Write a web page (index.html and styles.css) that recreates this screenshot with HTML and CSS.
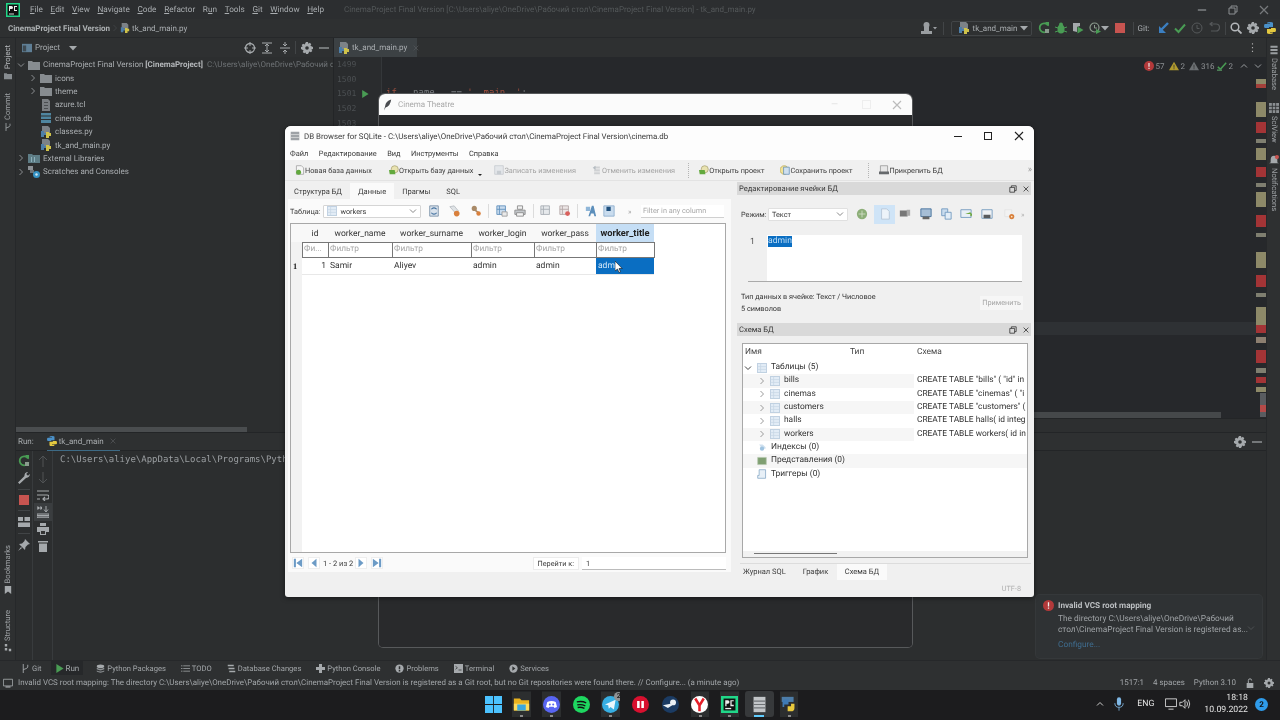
FILE: index.html
```html
<!DOCTYPE html>
<html lang="ru">
<head>
<meta charset="utf-8">
<title>PyCharm and DB Browser for SQLite</title>
<link rel="stylesheet" href="styles.css">
</head>
<body>
<svg class="sprite" xmlns="http://www.w3.org/2000/svg">
  <symbol id="folder" viewBox="0 0 12 10"><path d="M0 1h4l1 1h7v8H0z" fill="#878c90"/></symbol>
  <symbol id="py" viewBox="0 0 12 12"><path d="M2 0h6l2 2v5H2z" fill="#7c8287"/><path d="M1 5h3v2h2v2H4v2H1z" fill="#4d7ea8"/><path d="M6 6h3v1h2v3H9v2H6V9h0z" fill="#cfc24a"/></symbol>
  <symbol id="pylogo" viewBox="0 0 12 12"><path d="M3 1q0-1 3-1t3 1v4H5v1H1Q0 6 0 4t1-2h5V1.500H3z" fill="#4a90c8"/><path d="M9 11q0 1-3 1t-3-1V7h4V6h4q1 0 1 2t-1 2H6v.5h3z" fill="#e3c83f"/></symbol>
  <symbol id="dbfile" viewBox="0 0 12 12"><path d="M1 1h10v2.500H1zM1 4.500h10V7H1zM1 8h10v3H1z" fill="#4f86a0"/></symbol>
  <symbol id="tcl" viewBox="0 0 12 12"><path d="M2 0h6l2 2v10H2z" fill="#7a7e82"/><path d="M4 3h4v1H4zM4 6h4v1H4zM4 9h4v1H4z" fill="#4a4d50"/></symbol>
  <symbol id="libs" viewBox="0 0 12 10"><path d="M0 1h4l1 1h7v8H0z" fill="#5e7d86"/><path d="M3 4h1v5H3zM6 4h1v5H6z" fill="#8bb0bb"/></symbol>
  <symbol id="scratch" viewBox="0 0 12 12"><path d="M0 0h5v4H0z" fill="#8b9095"/><path d="M2 4h4v3H2z" fill="#6e7377"/><circle cx="8.500" cy="8.500" r="3.500" fill="#3592c4"/><circle cx="8.500" cy="8.500" r="1.200" fill="#cfe6f2"/></symbol>
  <symbol id="chevr" viewBox="0 0 8 8"><path d="M2.500 1l3 3-3 3" fill="none" stroke="currentColor"/></symbol>
  <symbol id="chevd" viewBox="0 0 8 8"><path d="M1 2.500l3 3 3-3" fill="none" stroke="currentColor"/></symbol>
  <symbol id="chevup" viewBox="0 0 8 8"><path d="M1 5.500l3-3 3 3" fill="none" stroke="currentColor"/></symbol>
  <symbol id="restore-d" viewBox="0 0 10 10"><path d="M1 3h6v6H1zM3 3V1h6v6H7" fill="none" stroke="#8b8e91"/></symbol>
  <symbol id="target" viewBox="0 0 12 12"><circle cx="6" cy="6" r="4.500" fill="none" stroke="#a5a9ac" stroke-width="1.300"/><path d="M6 0v4M6 8v4M0 6h4M8 6h4" stroke="#a5a9ac"/></symbol>
  <symbol id="expand" viewBox="0 0 12 12"><path d="M1 1h10M1 11h10M6 2.500v7M4 4l2-2 2 2M4 8l2 2 2-2" fill="none" stroke="#a5a9ac"/></symbol>
  <symbol id="collapse" viewBox="0 0 12 12"><path d="M1 6h10M6 0v3.500M6 8.500V12M4 2l2 2 2-2M4 10l2-2 2 2" fill="none" stroke="#a5a9ac"/></symbol>
  <symbol id="gear" viewBox="0 0 12 12"><path d="M5 0h2l.4 1.700 1.500-.9 1.400 1.400-.9 1.500L12 5v2l-1.600.4.900 1.500-1.400 1.400-1.500-.9L7 12H5l-.4-1.600-1.500.9-1.400-1.400.9-1.500L0 7V5l1.600-.4-.9-1.500 1.400-1.400 1.500.9z" fill="#a5a9ac"/><circle cx="6" cy="6" r="1.800" fill="#2e3031"/></symbol>
  <symbol id="minus" viewBox="0 0 12 12"><path d="M1 6h10" stroke="#a5a9ac" stroke-width="1.200"/></symbol>
  <symbol id="panel" viewBox="0 0 12 12"><path d="M0 1h12v10H0z" fill="#5f7f96"/><path d="M1 3h4v7H1z" fill="#3e4a52"/></symbol>
  <symbol id="play" viewBox="0 0 10 10"><path d="M1.500 0l8 5-8 5z" fill="#499c54"/></symbol>
  <symbol id="rerun" viewBox="0 0 12 12"><path d="M10 3.500A4.500 4.500 0 1 0 10.500 7" fill="none" stroke="#499c54" stroke-width="1.800"/><path d="M7 0h4v4.500z" fill="#499c54"/><path d="M7 7h4v4H7z" fill="#8a9a8e"/></symbol>
  <symbol id="bug" viewBox="0 0 12 12"><ellipse cx="6" cy="7" rx="3.500" ry="4.500" fill="#499c54"/><circle cx="6" cy="2.500" r="2" fill="#499c54"/><path d="M0 5l3 1M12 5L9 6M0 10l3-1M12 10L9 9" stroke="#499c54"/></symbol>
  <symbol id="cover" viewBox="0 0 12 12"><path d="M1 1h7v3L5 5v5l-4-1z" fill="#a5a9ac"/><path d="M5.500 4.500l6 3.500-6 3.500z" fill="#499c54"/></symbol>
  <symbol id="profile" viewBox="0 0 12 12"><circle cx="5.500" cy="5.500" r="4.500" fill="none" stroke="#8b9a8d" stroke-width="1.200"/><path d="M5.500 3v3h2.500" fill="none" stroke="#8b9a8d"/><path d="M7 7l5 2.500L7 12z" fill="#499c54"/></symbol>
  <symbol id="stop" viewBox="0 0 10 10"><path d="M0 0h10v10H0z" fill="#c75450"/></symbol>
  <symbol id="arrowd" viewBox="0 0 8 8"><path d="M0 2h8L4 6.500z" fill="#a5a9ac"/></symbol>
  <symbol id="person" viewBox="0 0 16 12"><circle cx="5.500" cy="3" r="3" fill="#9a9ea1"/><path d="M0 9h11v3H0zM3 5h5v4H3z" fill="#9a9ea1"/><path d="M12 5h4l-2 2.500z" fill="#9a9ea1"/></symbol>
  <symbol id="updatevcs" viewBox="0 0 12 12"><path d="M11 1L4 8" stroke="#3b7fc1" stroke-width="2.400"/><path d="M2 4v7h7z" fill="#3b7fc1"/></symbol>
  <symbol id="check" viewBox="0 0 12 12"><path d="M1 6.500l3.500 3.500L11 2.500" fill="none" stroke="#499c54" stroke-width="2"/></symbol>
  <symbol id="hist" viewBox="0 0 12 12"><circle cx="6" cy="6" r="5" fill="none" stroke="#55585a"/><path d="M6 3v3.500h2.500" fill="none" stroke="#55585a"/></symbol>
  <symbol id="undo" viewBox="0 0 12 12"><path d="M3 2h5a3.500 3.500 0 0 1 0 7H3M4.500 0L2 2l2.500 2" fill="none" stroke="#55585a" stroke-width="1.200"/></symbol>
  <symbol id="search" viewBox="0 0 12 12"><circle cx="5" cy="5" r="3.800" fill="none" stroke="#b4b7ba" stroke-width="1.500"/><path d="M8 8l3.500 3.500" stroke="#b4b7ba" stroke-width="1.800"/></symbol>
  <symbol id="pclogo" viewBox="0 0 14 14"><path d="M0 0h14v14H0z" fill="#21d789"/><path d="M1.500 1.500h11v11h-11z" fill="#111"/><path d="M3 10.500h5v1H3z" fill="#ddd"/><path d="M3 3h2.500a1 1 0 0 1 0 3H4v2H3zM8 3h3v1H9v3h2v1H8z" fill="#eee"/></symbol>
  <symbol id="feather" viewBox="0 0 10 14"><path d="M9 0Q2 2 1.500 8L0 14l2-4Q8 8 9 0z" fill="#4a4c50"/></symbol>
  <symbol id="err" viewBox="0 0 12 12"><circle cx="6" cy="6" r="6" fill="#b2393a"/><path d="M5.300 2.500h1.400v4.500H5.300zM5.300 8.200h1.400v1.400H5.300z" fill="#eee"/></symbol>
  <symbol id="warn" viewBox="0 0 12 12"><path d="M6 1l6 10H0z" fill="currentColor"/><path d="M5.500 4.500h1v3.500h-1zM5.500 8.800h1v1h-1z" fill="#333"/></symbol>
  <symbol id="chkgrn" viewBox="0 0 12 12"><path d="M1 7l3 3 7-8" fill="none" stroke="#499c54" stroke-width="1.800"/><path d="M0 10h6v2H0z" fill="#4b7d55"/></symbol>
  <symbol id="wrap" viewBox="0 0 12 12"><path d="M0 2h12M0 6h10a2 2 0 0 1 0 4H6M8 8l-2 2 2 2M0 10h3" fill="none" stroke="#a5a9ac" stroke-width="1.200"/></symbol>
  <symbol id="wrench" viewBox="0 0 12 12"><path d="M0 10.500L6.500 4Q6 1 9 0l1 .3L8.200 2 10 3.800 11.700 2q.6 3-3.700 4L1.500 12z" fill="#a5a9ac"/></symbol>
  <symbol id="layout" viewBox="0 0 12 10"><path d="M0 0h5v4H0zM6.500 0H12v4H6.500zM0 5.500h12V10H0z" fill="#a5a9ac"/></symbol>
  <symbol id="pin" viewBox="0 0 12 12"><path d="M7 0l5 5-2 .5-2.500 2.500L7 11 1 5l3-.5L6.500 2z" fill="#a5a9ac"/><path d="M3 8l-3 4 4-3z" fill="#a5a9ac"/></symbol>
  <symbol id="up" viewBox="0 0 10 12"><path d="M5 12V1M1 5l4-4 4 4" fill="none" stroke="#505355"/></symbol>
  <symbol id="down" viewBox="0 0 10 12"><path d="M5 0v11M1 7l4 4 4-4" fill="none" stroke="#505355"/></symbol>
  <symbol id="scroll" viewBox="0 0 12 12"><path d="M0 1h1.500v2H0zM3 1h1.500v2H3zM0 8h12v1.500H0zM0 11h12v1H0zM9 0v5M7 3.500L9 6l2-2.500" fill="none" stroke="#a5a9ac"/></symbol>
  <symbol id="print" viewBox="0 0 12 12"><path d="M3 0h6v3H3zM0 4h12v5H0zM3 7h6v5H3z" fill="#a5a9ac"/><path d="M4 8h4v3H4z" fill="#333"/></symbol>
  <symbol id="trash" viewBox="0 0 10 12"><path d="M0 1h10v1.500H0zM1 3.500h8V12H1z" fill="#a5a9ac"/></symbol>
  <symbol id="bookmark" viewBox="0 0 10 10"><path d="M1 0h8v10L5 7l-4 3z" fill="#a5a9ac"/></symbol>
  <symbol id="structure" viewBox="0 0 10 10"><path d="M1 0h3v3H1zM1 5h3v3H1zM6 6h3v3H6z" fill="#a5a9ac"/></symbol>
  <symbol id="gitbr" viewBox="0 0 10 12"><path d="M2 0v12M8 1v3Q8 6 2 7.500" fill="none" stroke="#a5a9ac" stroke-width="1.200"/></symbol>
  <symbol id="list" viewBox="0 0 12 10"><path d="M0 1h2v1H0zM3 1h9v1H3zM0 4.500h2v1H0zM3 4.500h9v1H3zM0 8h2v1H0zM3 8h9v1H3z" fill="#a5a9ac"/></symbol>
  <symbol id="stack" viewBox="0 0 12 12"><path d="M1 1h8v2H1zM2 5h8v2H2zM3 9h8v2H3z" fill="#a5a9ac"/></symbol>
  <symbol id="pkg" viewBox="0 0 12 12"><ellipse cx="6" cy="3" rx="5" ry="2.500" fill="#a5a9ac"/><path d="M1 5q5 3 10 0v2q-5 3-10 0zM1 8.500q5 3 10 0V10q-5 3-10 0z" fill="#8c9093"/></symbol>
  <symbol id="console" viewBox="0 0 12 12"><path d="M4 0h4v4h4v4H8v4H4V8H0V4h4z" fill="#a5a9ac"/></symbol>
  <symbol id="infoic" viewBox="0 0 12 12"><circle cx="6" cy="6" r="5.500" fill="#a5a9ac"/><path d="M5 3h2v4H5zM5 8h2v2H5z" fill="#2e3031"/></symbol>
  <symbol id="term" viewBox="0 0 12 12"><path d="M0 0h12v12H0z" fill="#a5a9ac"/><path d="M2 3l2.500 2L2 7M6 8h4" fill="none" stroke="#2e3031"/></symbol>
  <symbol id="svc" viewBox="0 0 12 12"><circle cx="6" cy="6" r="5.500" fill="#a5a9ac"/><path d="M4.500 3l4 3-4 3z" fill="#2e3031"/></symbol>
  <symbol id="square" viewBox="0 0 12 12"><path d="M.5 1.500h11v8h-11z" fill="none" stroke="#a5a9ac"/><path d="M3 10h6v1.500H3z" fill="#a5a9ac"/></symbol>
  <symbol id="lock" viewBox="0 0 12 12"><path d="M2 6h8v6H2z" fill="#a5a9ac"/><path d="M4 6V3q0-2 2-2t2 2" fill="none" stroke="#a5a9ac" stroke-width="1.200"/></symbol>
  <symbol id="grid3" viewBox="0 0 12 12"><path d="M0 0h12v12H0z" fill="#8a8e91"/><path d="M4 0v12M8 0v12M0 4h12M0 8h12" stroke="#2e3031"/></symbol>
  <symbol id="bell" viewBox="0 0 12 12"><path d="M6 1q4 0 4 5v3l2 1H0l2-1V6q0-5 4-5z" fill="#a5a9ac"/><circle cx="9.500" cy="2.500" r="2.500" fill="#c75450"/></symbol>
  <symbol id="cyl" viewBox="0 0 12 14"><path d="M1 1h10v3H1zM1 5.500h10v3H1zM1 10h10v3H1z" fill="#9a9ea1"/></symbol>
  <symbol id="dbnew" viewBox="0 0 14 14"><path d="M2 1h7l3 3v9H2z" fill="#f6f6f6" stroke="#9a9a9a"/><circle cx="5" cy="10" r="3.500" fill="#62a93d"/></symbol>
  <symbol id="dbopen" viewBox="0 0 14 14"><circle cx="8" cy="6" r="5" fill="#e8e2b0" stroke="#a59f70"/><path d="M0 7h8l1 6H1z" fill="#62a93d"/></symbol>
  <symbol id="dbsave" viewBox="0 0 14 14"><path d="M1 1h12v12H1z" fill="#e4e7ea" stroke="#c2c7cc"/><path d="M4 8h6v5H4z" fill="#c7ccd1"/></symbol>
  <symbol id="dbundo" viewBox="0 0 14 14"><path d="M3 2h8v3H3zM3 6h8v3H3zM3 10h8v3H3z" fill="#cfd1d3"/><path d="M5 1l-4 3 4 3z" fill="#b5bcc2"/></symbol>
  <symbol id="dbsavep" viewBox="0 0 14 14"><circle cx="6" cy="7" r="6" fill="#f1e29a" stroke="#bba94f"/><path d="M5 3h8v10H5z" fill="#cfe0ef" stroke="#5b8ab5"/></symbol>
  <symbol id="dbattach" viewBox="0 0 14 14"><path d="M2 1h10v11H2z" fill="#e7e7e7" stroke="#8e8e8e"/><path d="M0 9h14v4H0z" fill="#66696c"/></symbol>
  <symbol id="tbl" viewBox="0 0 14 14"><path d="M.5.500h13v13H.5z" fill="#e2ecf6" stroke="#a6bdd4"/><path d="M5 1v12M1 5h12M1 9h12" stroke="#c6d6e6"/></symbol>
  <symbol id="refresh" viewBox="0 0 14 14"><path d="M2 1h10v12H2z" fill="#d9e2ec" stroke="#7a90a6"/><path d="M4 5a3.500 3.500 0 0 1 6 0M10 9a3.500 3.500 0 0 1-6 0" fill="none" stroke="#3e6d9c" stroke-width="1.300"/></symbol>
  <symbol id="clear" viewBox="0 0 14 14"><path d="M1 2l5-1 5 6-3 3z" fill="#dfe3e6" stroke="#b9bec2"/><circle cx="9" cy="10" r="3.300" fill="#d9803d"/></symbol>
  <symbol id="key" viewBox="0 0 14 14"><circle cx="5" cy="4" r="3" fill="#a98a68"/><path d="M6 6l5 4" stroke="#a98a68" stroke-width="2"/><circle cx="10" cy="10" r="2.600" fill="#d9803d"/></symbol>
  <symbol id="export" viewBox="0 0 14 14"><path d="M1 1h10v10H1z" fill="#c9dcee" stroke="#5d8fbb"/><path d="M1 5h10M4 1v10" stroke="#5d8fbb"/><path d="M7 8h6v5H7z" fill="#eaeaea" stroke="#9a9a9a"/></symbol>
  <symbol id="printer" viewBox="0 0 14 14"><path d="M4 1h6v4H4z" fill="#f1f1f1" stroke="#888"/><path d="M1 6h12v5H1z" fill="#c4c8cc" stroke="#888"/><path d="M3 9h8v4H3z" fill="#f4f4f4" stroke="#888"/></symbol>
  <symbol id="addrow" viewBox="0 0 14 14"><path d="M1 1h10v10H1z" fill="#e6e9ec" stroke="#a6acb3"/><path d="M1 5h10M4 1v10" stroke="#a6acb3"/></symbol>
  <symbol id="delrow" viewBox="0 0 14 14"><path d="M1 1h10v10H1z" fill="#ece6e6" stroke="#b3a6a6"/><path d="M1 5h10M4 1v10" stroke="#b3a6a6"/><circle cx="10" cy="10" r="2.800" fill="#d9605c"/></symbol>
  <symbol id="findbk" viewBox="0 0 14 14"><path d="M4 13L8 1h2l3 12h-2l-1-3H7l-1 3z" fill="#5d8fbb"/><path d="M1 2h5v5H1z" fill="#8fb6d8"/></symbol>
  <symbol id="saveblue" viewBox="0 0 14 14"><path d="M1 1h12v12H1z" fill="#c9dcee" stroke="#8fb0ce"/><path d="M4 2h5v5H4z" fill="#1f4f7d"/></symbol>
  <symbol id="greenball" viewBox="0 0 14 14"><circle cx="7" cy="7" r="6" fill="#8cae78"/><path d="M3 7h8M7 3v8" stroke="#d3e0c9"/></symbol>
  <symbol id="docpage" viewBox="0 0 14 14"><path d="M3 1h6l3 3v9H3z" fill="#edf3f9" stroke="#b4c5d6"/></symbol>
  <symbol id="blackpage" viewBox="0 0 14 14"><path d="M1 3h9v7H1z" fill="#777"/><path d="M9 2h4v7H9z" fill="#aaa"/></symbol>
  <symbol id="diskdoc" viewBox="0 0 14 14"><path d="M1 1h12v9H1z" fill="#a6bed6" stroke="#3f6c98"/><path d="M3 10h8v3H3z" fill="#666"/></symbol>
  <symbol id="copydoc" viewBox="0 0 14 14"><path d="M2 1h7v8H2z" fill="#c9dcee" stroke="#6e97bd"/><path d="M6 5h7v8H6z" fill="#e2edf7" stroke="#6e97bd"/></symbol>
  <symbol id="imggreen" viewBox="0 0 14 14"><path d="M1 2h12v9H1z" fill="#e8eff5" stroke="#6f97bb"/><path d="M6 7h6v3l3-2-3-3z" fill="#6ea83e"/></symbol>
  <symbol id="imggray" viewBox="0 0 14 14"><path d="M1 2h12v10H1z" fill="#eef1f4" stroke="#6f97bb"/><path d="M3 8h8v4H3z" fill="#585b5e"/></symbol>
  <symbol id="orangegear" viewBox="0 0 14 14"><path d="M1 2h8v8H1z" fill="#f2f2f2" stroke="#e4e4e4"/><circle cx="9" cy="10" r="3" fill="#d9803d"/><circle cx="9" cy="10" r="1" fill="#f7e7c8"/></symbol>
  <symbol id="first" viewBox="0 0 12 12"><path d="M1 1h2.500v10H1zM11 1v10L4 6z" fill="#6c9bc6"/></symbol>
  <symbol id="prev" viewBox="0 0 12 12"><path d="M9 1v10L3 6z" fill="#6c9bc6"/></symbol>
  <symbol id="next" viewBox="0 0 12 12"><path d="M3 1v10l6-5z" fill="#6c9bc6"/></symbol>
  <symbol id="last" viewBox="0 0 12 12"><path d="M11 1H8.500v10H11zM1 1v10l7-5z" fill="#6c9bc6"/></symbol>
  <symbol id="restore" viewBox="0 0 10 10"><path d="M1 3h6v6H1zM3 3V1h6v6H7" fill="none" stroke="#333"/></symbol>
  <symbol id="x" viewBox="0 0 10 10"><path d="M1 1l8 8M9 1l-8 8" stroke="currentColor" stroke-width="1.200"/></symbol>
  <symbol id="index" viewBox="0 0 14 14"><path d="M3 2h5l4 4v2H7z" fill="#cfe0ef"/><circle cx="7" cy="8" r="3" fill="#9fc3e0"/></symbol>
  <symbol id="view" viewBox="0 0 14 14"><path d="M1 2h12v10H1z" fill="#7f9f72" stroke="#b6c6ae"/></symbol>
  <symbol id="trigger" viewBox="0 0 14 14"><path d="M3 1h9v12H1V9h2z" fill="#e8f0f7" stroke="#7ea2c2"/></symbol>
  <symbol id="dbicon" viewBox="0 0 14 14"><path d="M1 1h12v12H1z" fill="#9ea2a6"/><path d="M1 5h12M1 9h12" stroke="#e5e5e5"/></symbol>
  <symbol id="win" viewBox="0 0 20 20"><path d="M0 0h9.500v9.500H0zM10.500 0H20v9.500h-9.500zM0 10.500h9.500V20H0zM10.500 10.500H20V20h-9.500z" fill="#4cc2ff"/></symbol>
  <symbol id="explorer" viewBox="0 0 20 20"><path d="M1 3h7l2 2h9v12H1z" fill="#e8b21f"/><path d="M1 9h18v8H1z" fill="#fbdb5e"/><path d="M5 10h10v7H5z" fill="#3aa7dd"/></symbol>
  <symbol id="discord" viewBox="0 0 20 20"><circle cx="10" cy="10" r="10" fill="#5865f2"/><path d="M5 7q5-2.500 10 0l1.500 6-3 1.200-1-1.500h-5l-1 1.500-3-1.200z" fill="#fff"/><circle cx="8" cy="10" r="1.200" fill="#5865f2"/><circle cx="12" cy="10" r="1.200" fill="#5865f2"/></symbol>
  <symbol id="spotify" viewBox="0 0 20 20"><circle cx="10" cy="10" r="10" fill="#1ed760"/><path d="M4.500 7q6-1.500 11 1M5 10.500q5-1 9.500 1M5.500 13.500q4-.8 8 1" fill="none" stroke="#111" stroke-width="1.600"/></symbol>
  <symbol id="telegram" viewBox="0 0 20 20"><circle cx="10" cy="10" r="10" fill="#37aee2"/><path d="M3.500 10L16 4.500 14 16l-4-3-2 2-.7-4z" fill="#eaf6fc"/></symbol>
  <symbol id="redapp" viewBox="0 0 20 20"><circle cx="10" cy="10" r="10" fill="#d8102f"/><path d="M6 6h3v8H6zM11 6h3v8h-3z" fill="#fff"/></symbol>
  <symbol id="steam" viewBox="0 0 20 20"><circle cx="10" cy="10" r="10" fill="#1b3b63"/><circle cx="13" cy="7.500" r="3.500" fill="#eaf0f5"/><path d="M1 11l6 3 5-3-2-2z" fill="#eaf0f5"/></symbol>
  <symbol id="yandex" viewBox="0 0 20 20"><circle cx="10" cy="10" r="10" fill="#fff"/><path d="M5 3l5 8 5-8M10 10.500V18" fill="none" stroke="#e5202a" stroke-width="3"/></symbol>
  <symbol id="pycharm" viewBox="0 0 20 20"><path d="M0 0h20v20H0z" fill="#21d789"/><path d="M3 3h14v14H3z" fill="#111"/><path d="M5 14h7v1.500H5z" fill="#eee"/><path d="M5 5h3a1.700 1.700 0 0 1 0 4H6.500v3H5zM11 5h4v1.300h-2.500v4H15V12h-4z" fill="#eee"/></symbol>
  <symbol id="dbtask" viewBox="0 0 20 20"><path d="M3 1h14v18H3z" fill="#c2c5c8"/><path d="M3 6h14M3 10h14M3 14h14" stroke="#6f7275" stroke-width="1.400"/></symbol>
  <symbol id="python" viewBox="0 0 20 20"><path d="M2 1h14v6H2z" fill="#4d7da8"/><path d="M3 7q0-3 3-3h4v6H5v3H3z" fill="#3e7ab5"/><path d="M13 9h4v5q0 4-4 4H9v-6h4z" fill="#e8c83c"/></symbol>
  <symbol id="mic" viewBox="0 0 12 16"><rect x="3.500" y="0" width="5" height="10" rx="2.500" fill="#7fb8e6"/><path d="M1 7q0 5 5 5t5-5M6 12v4" fill="none" stroke="#7fb8e6"/></symbol>
  <symbol id="mon" viewBox="0 0 14 14"><path d="M.5 1h13v9H.5zM4 13h6" fill="none" stroke="#e5e5e5"/></symbol>
  <symbol id="vol" viewBox="0 0 14 14"><path d="M1 5h3l3-3v10L4 9H1z" fill="none" stroke="#e5e5e5"/><path d="M9 4q2 3 0 6M11 2q3 5 0 10" fill="none" stroke="#e5e5e5"/></symbol>
</svg>

<div class="cinema">
  <div class="cin-title">
    <svg class="ic-feather"><use href="#feather"/></svg>
    <span class="cin-name">Cinema Theatre</span>
    <span class="cin-ctrls"><span class="cin-min">—</span><span class="cin-max"></span><svg class="ic-10 cin-x"><use href="#x"/></svg></span>
  </div>
  <div class="cin-body"></div>
</div>

<div class="ide">
  <header class="titlebar">
    <svg class="ic-14"><use href="#pclogo"/></svg>
    <nav class="menu"><span><u>F</u>ile</span><span><u>E</u>dit</span><span><u>V</u>iew</span><span><u>N</u>avigate</span><span><u>C</u>ode</span><span><u>R</u>efactor</span><span>R<u>u</u>n</span><span><u>T</u>ools</span><span><u>G</u>it</span><span><u>W</u>indow</span><span><u>H</u>elp</span></nav>
    <span class="ide-title">CinemaProject Final Version [C:\Users\aliye\OneDrive\Рабочий стол\CinemaProject Final Version] - tk_and_main.py</span>
    <span class="winctl"><svg class="ic-10"><use href="#minus"/></svg><svg class="ic-10"><use href="#restore-d"/></svg><svg class="ic-10 dimx"><use href="#x"/></svg></span>
  </header>
  <div class="navbar">
    <b class="crumb">CinemaProject Final Version</b><svg class="ic-8 sep"><use href="#chevr"/></svg><svg class="ic-10"><use href="#py"/></svg><span>tk_and_main.py</span>
    <div class="runbar">
      <svg class="ic-w16"><use href="#person"/></svg>
      <i class="vsep vs0"></i>
      <span class="combo"><svg class="ic-12"><use href="#py"/></svg>tk_and_main<svg class="ic-8"><use href="#arrowd"/></svg></span>
      <svg class="ic-12 g17"><use href="#rerun"/></svg>
      <svg class="ic-12 g17"><use href="#bug"/></svg>
      <svg class="ic-12 g17"><use href="#cover"/></svg>
      <svg class="ic-12"><use href="#profile"/></svg>
      <svg class="ic-8 g3"><use href="#arrowd"/></svg>
      <svg class="ic-10"><use href="#stop"/></svg>
      <i class="vsep vs1"></i>
      <span class="gitlbl">Git:</span>
      <svg class="ic-12 g6"><use href="#updatevcs"/></svg>
      <svg class="ic-12 g6"><use href="#check"/></svg>
      <svg class="ic-12 g6"><use href="#hist"/></svg>
      <svg class="ic-12 g6"><use href="#undo"/></svg>
      <i class="vsep vs2"></i>
      <svg class="ic-12 g6"><use href="#search"/></svg>
      <svg class="ic-12 g6"><use href="#gear"/></svg>
      <svg class="ic-12"><use href="#pylogo"/></svg>
    </div>
  </div>

  <div class="workspace">
    <aside class="strip strip-left">
      <div class="vert vleft vactive"><span>Project</span><svg class="ic-8"><use href="#folder"/></svg></div>
      <div class="vert vleft vcommit"><span>Commit</span><svg class="ic-8"><use href="#gitbr"/></svg></div>
      <div class="vfill"></div>
      <div class="vert vleft"><span>Bookmarks</span><svg class="ic-8"><use href="#bookmark"/></svg></div>
      <div class="vert vleft vstruct"><span>Structure</span><svg class="ic-8"><use href="#structure"/></svg></div>
    </aside>

    <div class="center">
      <div class="top">
        <section class="project">
          <div class="proj-head">
            <svg class="ic-10"><use href="#panel"/></svg><span class="proj-name">Project</span><svg class="ic-8"><use href="#arrowd"/></svg>
            <span class="proj-tools"><svg class="ic-12"><use href="#target"/></svg><svg class="ic-12"><use href="#expand"/></svg><svg class="ic-12"><use href="#collapse"/></svg><i class="vsep"></i><svg class="ic-12"><use href="#gear"/></svg><svg class="ic-12"><use href="#minus"/></svg></span>
          </div>
          <ul class="tree">
            <li class="d0"><svg class="ic-8"><use href="#chevd"/></svg><svg class="ic-12"><use href="#folder"/></svg><span>CinemaProject Final Version <b>[CinemaProject]</b></span><em>C:\Users\aliye\OneDrive\Рабочий с</em></li>
            <li class="d1"><svg class="ic-8"><use href="#chevr"/></svg><svg class="ic-12"><use href="#folder"/></svg><span>icons</span></li>
            <li class="d1"><svg class="ic-8"><use href="#chevr"/></svg><svg class="ic-12"><use href="#folder"/></svg><span>theme</span></li>
            <li class="d2"><svg class="ic-12"><use href="#tcl"/></svg><span>azure.tcl</span></li>
            <li class="d2"><svg class="ic-12"><use href="#dbfile"/></svg><span>cinema.db</span></li>
            <li class="d2"><svg class="ic-12"><use href="#py"/></svg><span>classes.py</span></li>
            <li class="d2"><svg class="ic-12"><use href="#py"/></svg><span>tk_and_main.py</span></li>
            <li class="d0"><svg class="ic-8"><use href="#chevr"/></svg><svg class="ic-12"><use href="#libs"/></svg><span>External Libraries</span></li>
            <li class="d0"><svg class="ic-8"><use href="#chevr"/></svg><svg class="ic-12"><use href="#scratch"/></svg><span>Scratches and Consoles</span></li>
          </ul>
          <div class="hscroll hscroll-proj"><i></i></div>
        </section>

        <section class="editor">
          <div class="tabs">
            <span class="tab"><svg class="ic-12"><use href="#py"/></svg>tk_and_main.py<svg class="ic-6 tabx"><use href="#x"/></svg></span>
            <span class="dots">⋮</span>
          </div>
          <div class="code">
            <div class="gutter"><span>1499</span><span>1500</span><span>1501<svg class="runmark"><use href="#play"/></svg></span><span>1502</span><span>1503</span></div>
            <div class="codelines"><div><span class="kw">if</span> __name__ == <span class="str">'__main__'</span>:</div></div>
            <div class="inspect"><svg class="ic-10"><use href="#err"/></svg><span>57</span><svg class="ic-10 wy"><use href="#warn"/></svg><span>2</span><svg class="ic-10 wg"><use href="#warn"/></svg><span class="nomar">316</span><svg class="ic-10"><use href="#chkgrn"/></svg><span>2</span><svg class="ic-8 mg"><use href="#chevup"/></svg><svg class="ic-8 mg mg2"><use href="#chevd"/></svg></div>
            <div class="caretrow"></div>
            <div class="marks"><i class="thumb"></i></div>
            <div class="hscroll hscroll-ed"><i></i></div>
          </div>
          <div class="breadcrumbs"></div>
        </section>
      </div>

      <section class="run">
        <div class="run-head">
          <span class="run-lbl">Run:</span>
          <span class="run-tab"><svg class="ic-10"><use href="#pylogo"/></svg>tk_and_main<svg class="ic-6 tabx"><use href="#x"/></svg></span>
          <span class="proj-tools"><svg class="ic-12"><use href="#gear"/></svg><svg class="ic-12"><use href="#minus"/></svg></span>
        </div>
        <div class="run-body">
          <div class="run-col run-col1">
            <svg class="ic-12"><use href="#rerun"/></svg><svg class="ic-12"><use href="#wrench"/></svg><i class="hsep"></i><svg class="ic-10"><use href="#stop"/></svg><i class="hsep"></i><svg class="ic-12"><use href="#layout"/></svg><i class="hsep"></i><svg class="ic-12"><use href="#pin"/></svg>
          </div>
          <div class="run-col run-col2">
            <svg><use href="#up"/></svg><svg><use href="#down"/></svg><svg><use href="#wrap"/></svg><svg class="on"><use href="#scroll"/></svg><svg><use href="#print"/></svg><svg><use href="#trash"/></svg>
          </div>
          <pre class="out">C:\Users\aliye\AppData\Local\Programs\Pyth</pre>
        </div>
      </section>
    </div>

    <aside class="strip strip-right">
      <div class="vert vright"><svg class="ic-10"><use href="#cyl"/></svg><span>Database</span></div>
      <div class="vert vright"><svg class="ic-10"><use href="#grid3"/></svg><span>SciView</span></div>
      <div class="vert vright"><svg class="ic-10"><use href="#bell"/></svg><span>Notifications</span></div>
    </aside>
  </div>

  <div class="toolbar-bottom">
    <span><svg class="ic-9"><use href="#gitbr"/></svg>Git</span>
    <span class="active"><svg class="ic-9"><use href="#play"/></svg>Run</span>
    <span><svg class="ic-9"><use href="#pkg"/></svg>Python Packages</span>
    <span><svg class="ic-9"><use href="#list"/></svg>TODO</span>
    <span><svg class="ic-9"><use href="#stack"/></svg>Database Changes</span>
    <span><svg class="ic-9"><use href="#console"/></svg>Python Console</span>
    <span><svg class="ic-9"><use href="#infoic"/></svg>Problems</span>
    <span><svg class="ic-9"><use href="#term"/></svg>Terminal</span>
    <span><svg class="ic-9"><use href="#svc"/></svg>Services</span>
  </div>
  <div class="status">
    <svg class="ic-10"><use href="#square"/></svg>
    <span class="status-msg">Invalid VCS root mapping: The directory C:\Users\aliye\OneDrive\Рабочий стол\CinemaProject Final Version is registered as a Git root, but no Git repositories were found there. // Configure... (a minute ago)</span>
    <span class="status-right"><span>1517:1</span><span>4 spaces</span><span>Python 3.10</span><svg class="ic-10"><use href="#lock"/></svg><svg class="ic-10"><use href="#gear"/></svg></span>
  </div>
</div>

<aside class="notif">
  <svg class="notif-ic"><use href="#err"/></svg>
  <div class="notif-text">
    <b>Invalid VCS root mapping</b>
    <p>The directory C:\Users\aliye\OneDrive\Рабочий<br>стол\CinemaProject Final Version is registered as...</p>
    <a>Configure...</a>
  </div>
  <svg class="ic-8 notif-chev"><use href="#chevd"/></svg>
</aside>

<section class="db">
  <div class="db-title">
    <svg class="ic-10"><use href="#dbicon"/></svg>
    <span>DB Browser for SQLite - C:\Users\aliye\OneDrive\Рабочий стол\CinemaProject Final Version\cinema.db</span>
    <span class="db-ctrls"><i class="c-min"></i><i class="c-max"></i><svg class="ic-10"><use href="#x"/></svg></span>
  </div>
  <nav class="db-menu"><span>Файл</span><span>Редактирование</span><span>Вид</span><span>Инструменты</span><span>Справка</span></nav>
  <div class="db-toolbar">
    <span class="tb m17"><svg><use href="#dbnew"/></svg>Новая база данных</span>
    <span class="tb tb-open"><svg><use href="#dbopen"/></svg>Открыть базу данных<i class="drop"></i></span>
    <span class="tb off m16"><svg><use href="#dbsave"/></svg>Записать изменения</span>
    <span class="tb off m13"><svg><use href="#dbundo"/></svg>Отменить изменения</span>
    <i class="grip"></i>
    <span class="tb m16"><svg><use href="#dbopen"/></svg>Открыть проект</span>
    <span class="tb m16"><svg><use href="#dbsavep"/></svg>Сохранить проект</span>
    <i class="grip"></i>
    <span class="tb"><svg><use href="#dbattach"/></svg>Прикрепить БД</span>
    <span class="more">»</span>
  </div>

  <div class="db-main">
    <div class="db-left">
      <div class="db-tabs"><span>Структура БД</span><span class="sel">Данные</span><span>Прагмы</span><span>SQL</span></div>
      <div class="db-pane">
        <div class="tblbar">
          <span class="lbl">Таблица:</span>
          <span class="select tbl-sel"><svg class="ic-10"><use href="#tbl"/></svg>workers<svg class="ic-8 sel-ch"><use href="#chevd"/></svg></span>
          <svg class="ic-12"><use href="#refresh"/></svg>
          <svg class="ic-12 tb1"><use href="#clear"/></svg>
          <svg class="ic-12 tb1"><use href="#key"/></svg>
          <i class="tsep"></i>
          <svg class="ic-12"><use href="#export"/></svg>
          <svg class="ic-12"><use href="#printer"/></svg>
          <i class="tsep"></i>
          <svg class="ic-12"><use href="#addrow"/></svg>
          <svg class="ic-12"><use href="#delrow"/></svg>
          <i class="tsep"></i>
          <svg class="ic-12"><use href="#findbk"/></svg>
          <svg class="ic-12"><use href="#saveblue"/></svg>
          <span class="more2">»</span>
          <span class="filter-any">Filter in any column</span>
        </div>
        <div class="grid">
          <div class="grid-table">
            <span class="hc"></span><span class="hc">id</span><span class="hc">worker_name</span><span class="hc">worker_surname</span><span class="hc">worker_login</span><span class="hc">worker_pass</span><span class="hc hsel">worker_title</span>
            <span class="rh"></span><span class="fc">Фи...</span><span class="fc">Фильтр</span><span class="fc">Фильтр</span><span class="fc">Фильтр</span><span class="fc">Фильтр</span><span class="fc">Фильтр</span>
            <span class="rh rhn">1</span><span class="dc num">1</span><span class="dc">Samir</span><span class="dc">Aliyev</span><span class="dc">admin</span><span class="dc">admin</span><span class="dc dsel">adm<svg class="cursor" viewBox="0 0 8 12"><path d="M0 0v10l2.500-2 1.500 3.500 1.500-.7L4 7.500h3.200z" fill="#fff" stroke="#111" stroke-width=".6"/></svg></span>
          </div>
        </div>
        <div class="pager">
          <svg class="pbtn"><use href="#first"/></svg>
          <svg class="pbtn m6"><use href="#prev"/></svg>
          <span class="pcount">1 - 2 из 2</span>
          <svg class="pbtn"><use href="#next"/></svg>
          <svg class="pbtn m6"><use href="#last"/></svg>
          <span class="goto">Перейти к:</span>
          <span class="goto-in">1</span>
        </div>
      </div>
    </div>

    <div class="db-right">
      <div class="dock-title"><span>Редактирование ячейки БД</span><span class="dock-ctl"><svg class="ic-8"><use href="#restore"/></svg><svg class="ic-6 dark"><use href="#x"/></svg></span></div>
      <div class="edit-dock">
        <div class="mode">
          <span class="mode-lbl">Режим:</span>
          <span class="select mode-sel">Текст<svg class="ic-8 sel-ch"><use href="#chevd"/></svg></span>
          <svg class="ic-12 mm8"><use href="#greenball"/></svg>
          <span class="on-btn"><svg class="ic-12"><use href="#docpage"/></svg></span>
          <svg class="ic-12 mm4"><use href="#blackpage"/></svg>
          <svg class="ic-12 mm9"><use href="#diskdoc"/></svg>
          <svg class="ic-12 mm8"><use href="#copydoc"/></svg>
          <svg class="ic-12 mm8"><use href="#imggreen"/></svg>
          <svg class="ic-12 mm9"><use href="#imggray"/></svg>
          <svg class="ic-12 mm11"><use href="#orangegear"/></svg>
          <span class="more3">»</span>
        </div>
        <div class="cell-editor"><span class="ln">1</span><span class="cell-text"><mark>admin</mark></span></div>
        <div class="cell-info">
          <div class="info-text"><p>Тип данных в ячейке: Текст / Числовое</p><p>5 символов</p></div>
          <span class="apply">Применить</span>
        </div>
      </div>
      <div class="dock-title dock2"><span>Схема БД</span><span class="dock-ctl"><svg class="ic-8"><use href="#restore"/></svg><svg class="ic-6 dark"><use href="#x"/></svg></span></div>
      <div class="schema-wrap">
        <div class="schema">
          <div class="srow shead"><span>Имя</span><span>Тип</span><span>Схема</span></div>
          <div class="srow"><span class="n0"><svg class="ic-8"><use href="#chevd"/></svg><svg class="ic-10"><use href="#tbl"/></svg>Таблицы (5)</span></div>
          <div class="srow alt"><span class="n1"><svg class="ic-8 lt"><use href="#chevr"/></svg><svg class="ic-10"><use href="#tbl"/></svg>bills</span><span></span><span>CREATE TABLE "bills" ( "id" in</span></div>
          <div class="srow"><span class="n1"><svg class="ic-8 lt"><use href="#chevr"/></svg><svg class="ic-10"><use href="#tbl"/></svg>cinemas</span><span></span><span>CREATE TABLE "cinemas" ( "i</span></div>
          <div class="srow alt"><span class="n1"><svg class="ic-8 lt"><use href="#chevr"/></svg><svg class="ic-10"><use href="#tbl"/></svg>customers</span><span></span><span>CREATE TABLE "customers" (</span></div>
          <div class="srow"><span class="n1"><svg class="ic-8 lt"><use href="#chevr"/></svg><svg class="ic-10"><use href="#tbl"/></svg>halls</span><span></span><span>CREATE TABLE halls( id integ</span></div>
          <div class="srow alt"><span class="n1"><svg class="ic-8 lt"><use href="#chevr"/></svg><svg class="ic-10"><use href="#tbl"/></svg>workers</span><span></span><span>CREATE TABLE workers( id in</span></div>
          <div class="srow wide"><span class="n0b"><svg class="ic-10"><use href="#index"/></svg>Индексы (0)</span></div>
          <div class="srow wide altw"><span class="n0b"><svg class="ic-10"><use href="#view"/></svg>Представления (0)</span></div>
          <div class="srow wide"><span class="n0b"><svg class="ic-10"><use href="#trigger"/></svg>Триггеры (0)</span></div>
          <div class="sch-scroll"><i></i></div>
        </div>
      </div>
      <div class="dock-tabs"><span>Журнал SQL</span><span>График</span><span class="sel">Схема БД</span></div>
    </div>
  </div>
  <div class="db-status">UTF-8</div>
</section>

<footer class="taskbar">
  <div class="task-icons">
    <svg class="tk"><use href="#win"/></svg>
    <span class="tkw run"><svg class="tk"><use href="#explorer"/></svg></span>
    <span class="tkw run"><svg class="tk"><use href="#discord"/></svg></span>
    <span class="tkw"><svg class="tk"><use href="#spotify"/></svg></span>
    <span class="tkw run"><svg class="tk"><use href="#telegram"/></svg><b class="badge">2</b></span>
    <span class="tkw"><svg class="tk"><use href="#redapp"/></svg></span>
    <span class="tkw"><svg class="tk"><use href="#steam"/></svg></span>
    <span class="tkw run"><svg class="tk"><use href="#yandex"/></svg></span>
    <span class="tkw run"><svg class="tk"><use href="#pycharm"/></svg></span>
    <span class="tkw cur"><svg class="tk"><use href="#dbtask"/></svg></span>
    <span class="tkw run"><svg class="tk"><use href="#python"/></svg></span>
  </div>
  <div class="tray">
    <svg class="ic-8 trayup"><use href="#chevup"/></svg>
    <svg class="ic-w10"><use href="#mic"/></svg>
    <span class="eng">ENG</span>
    <svg class="ic-12"><use href="#mon"/></svg>
    <svg class="ic-12"><use href="#vol"/></svg>
    <span class="clock"><span>18:18</span><span>10.09.2022</span></span>
    <b class="nbadge">2</b>
  </div>
</footer>
</body>
</html>
```
FILE: styles.css
```css
* { box-sizing: border-box; }
html, body { margin: 0; height: 100%; }
body {
  width: 1280px; height: 720px; overflow: hidden; position: relative;
  background: #1d1d1f; font: 8px Roboto, "Liberation Sans", sans-serif; color: #a9adb0;
  display: flex; flex-direction: column; text-rendering: geometricPrecision;
  filter: blur(.3px);
}
i, em, b, u { font-style: normal; }
.sprite { position: absolute; width: 0; height: 0; }
svg { flex: none; display: block; }
.ic-6 { width: 6px; height: 6px; }
.ic-8 { width: 8px; height: 8px; }
.ic-9 { width: 9px; height: 9px; }
.ic-10 { width: 10px; height: 10px; }
.ic-12 { width: 12px; height: 12px; }
.ic-14 { width: 14px; height: 14px; }
.ic-w16 { width: 16px; height: 12px; }
.ic-w10 { width: 10px; height: 14px; }
.ic-feather { width: 8px; height: 12px; }
.vsep { width: 1px; height: 13px; background: #424547; display: block; flex: none; }

/* IDE */
.ide { height: 690px; display: flex; flex-direction: column; background: #2e3031; }
.titlebar { height: 19px; display: flex; align-items: center; padding-left: 6px; background: #2c2e30; flex: none; }
.menu { display: flex; gap: 7.700px; margin-left: 10px; color: #a9adb0; font-size: 8.200px; }
.menu u { text-underline-offset: 1px; }
.ide-title { margin-left: 20px; color: #54585a; white-space: nowrap; }
.winctl { margin-left: auto; display: flex; gap: 21px; padding-right: 11px; }
.dimx { color: #77797c; }
.navbar { height: 19px; display: flex; align-items: center; padding-left: 8px; gap: 2px; flex: none; background: #2e3031; border-bottom: 1px solid #26282a; }
.crumb { color: #aeb2b4; font-weight: 700; }
.sep { color: #3f4244; margin: 0 -1px; }
.runbar { margin-left: auto; display: flex; align-items: center; padding-right: 4px; }
.vs0 { margin: 0 7px 0 6px; }
.vs1 { margin: 0 4px 0 8px; }
.vs2 { margin: 0 4.500px 0 0; }
.combo { width: 81px; height: 15px; border: 1px solid #424547; display: flex; align-items: center; gap: 3px; padding: 0 5px 0 6px; color: #a9adb0; border-radius: 2px; margin-right: 6px; }
.combo svg:last-child { margin-left: auto; }
.g17 { margin-right: 5px; }
.g3 { margin: 0 6px 0 0; }
.gitlbl { margin-right: 7px; }
.g6 { margin-right: 5px; }

.workspace { flex: 1; display: flex; min-height: 0; }
.strip { width: 16px; flex: none; display: flex; flex-direction: column; align-items: center; background: #2e3031; border-right: 1px solid #26282a; font-size: 7.600px; }
.strip-right { width: 14px; border-right: 0; border-left: 1px solid #26282a; padding-top: 7px; gap: 12.500px; }
.vert { display: flex; flex-direction: column; align-items: center; gap: 3px; color: #9ea2a5; }
.vert span { writing-mode: vertical-rl; white-space: nowrap; line-height: 12px; }
.vleft span { transform: rotate(180deg); }
.vactive { margin-top: 7px; color: #b9bcbf; }
.vcommit { margin-top: 13px; }
.vfill { flex: 1; }
.vstruct { margin-top: 16px; margin-bottom: 8px; }

.center { flex: 1; min-width: 0; display: flex; flex-direction: column; }
.top { height: 394px; display: flex; flex: none; }
.project { width: 318px; flex: none; display: flex; flex-direction: column; background: #2c2e2f; overflow: hidden; border-right: 1px solid #232527; }
.proj-head { height: 19px; display: flex; align-items: center; gap: 3px; padding: 0 3px 0 6px; flex: none; background: #2e3031; }
.proj-name { margin-right: 6px; }
.proj-tools { margin-left: auto; display: flex; align-items: center; gap: 5.500px; }
.proj-tools .vsep { margin: 0 -1px; }
.tree { list-style: none; margin: 0; padding: 1px 0 0; flex: 1; min-height: 0; }
.tree li { height: 13.400px; display: flex; align-items: center; white-space: nowrap; gap: 3px; color: #a9adb0; overflow: hidden; }
.tree li.d0 { padding-left: 1px; }
.tree li.d1 { padding-left: 13px; }
.tree li.d2 { padding-left: 24px; }
.tree b { color: #b4b7ba; }
.tree em { color: #6e7275; margin-left: 1px; }
.tree li svg.ic-8 { color: #8b8e91; }
.hscroll { flex: none; }
.hscroll i { display: block; height: 100%; background: #4a4d4f; }
.hscroll-proj { height: 5px; }
.hscroll-proj i { width: 231px; }

.editor { flex: 1; min-width: 0; display: flex; flex-direction: column; background: #26282b; }
.tabs { height: 19px; background: #2e3031; flex: none; display: flex; align-items: center; justify-content: space-between; padding-right: 8px; }
.tab { height: 19px; width: 83px; background: #3c4144; display: flex; align-items: center; gap: 2px; padding-left: 4px; color: #a9adb0; }
.tabx { color: #55585a; margin-left: 4px; }
.dots { color: #aaa; font-size: 11px; }
.code { flex: 1; min-height: 0; position: relative; display: flex; font: 9px "DejaVu Sans Mono", monospace; }
.gutter { width: 48px; flex: none; background: #2a2c2e; border-right: 1px solid #34373a; display: flex; flex-direction: column; padding: 0 0 0 3px; color: #4c5053; font-size: 8px; }
.gutter span { height: 14.700px; flex: none; display: flex; align-items: center; gap: 5px; }
.runmark { width: 8px; height: 8px; }
.codelines { padding: 31px 0 0 4px; color: #7a7e81; white-space: pre; }
.kw { color: #a0503f; }
.str { color: #a0503f; }
.inspect { position: absolute; top: 4px; right: 4px; display: flex; align-items: center; gap: 2px; font: 8px Roboto, sans-serif; color: #8e9194; }
.inspect span { margin-right: 2px; }
.inspect .nomar { margin-right: 0; }
.inspect .mg { color: #9a9da0; margin-left: 3px; }
.inspect .mg2 { margin-left: 4px; }
.wy { color: #b09a2e; }
.wg { color: #6c7073; }
.caretrow { position: absolute; left: 0; right: 10px; top: 265px; height: 13px; background: #2e3134; }
.marks {
  position: absolute; right: 0; top: 22px; width: 10px; height: 338px;
  background: linear-gradient(to bottom,
    #8d8968 0 5px, #a3403a 5px 9px, transparent 9px 23px, #8d8968 23px 38px, transparent 38px 43px, #a33436 43px 54px,
    transparent 54px 60px, #7f7f70 60px 64px, transparent 64px 69px, #8d8968 69px 81px, transparent 81px 88px, #a33436 88px 98px,
    transparent 98px 104px, #7f7f70 104px 108px, transparent 108px 113px, #8d8968 113px 128px, transparent 128px 136px, #a33436 136px 148px,
    transparent 148px 154px, #7f7f70 154px 158px, transparent 158px 173px, #8d8968 173px 189px, transparent 189px 196px, #a33436 196px 208px,
    transparent 208px 214px, #7f7f70 214px 218px, transparent 218px 228px, #8d8968 228px 246px, #a33436 246px 254px, transparent 254px 258px,
    #8d7f70 258px 264px, transparent 264px 271px, #a33436 271px 284px, transparent 284px 289px, #7f7f70 289px 294px, transparent 294px 298px,
    #a33436 298px 304px, transparent 304px 308px, #8d8968 308px 313px, transparent 313px);
}
.thumb { position: absolute; right: 0; top: 314px; height: 24px; width: 6px; background: linear-gradient(#595c60 0 12px, #b44a48 12px 19px, #595c60 19px); }
.hscroll-ed { position: absolute; left: 0; bottom: 0; height: 6px; width: 887px; }
.hscroll-ed i { background: #45484a; }
.breadcrumbs { height: 14px; flex: none; background: #2d2f30; border-top: 1px solid #232527; }

.run { flex: 1; min-height: 0; background: #2c2e2f; display: flex; flex-direction: column; border-top: 1px solid #232527; overflow: hidden; }
.run-head { height: 18px; display: flex; align-items: center; flex: none; padding: 0 3px 0 2px; gap: 9px; border-bottom: 1px solid #232527; background: #2e3031; }
.run-lbl { color: #a9adb0; }
.run-tab { display: flex; align-items: center; gap: 2px; color: #a9adb0; height: 18px; border-bottom: 1px solid #3d6a85; padding-right: 4px; margin-left: 4px; }
.run-head .proj-tools { gap: 5px; }
.run-body { flex: 1; display: flex; min-height: 0; }
.run-col { width: 17px; flex: none; display: flex; flex-direction: column; align-items: center; gap: 5px; padding-top: 4px; border-right: 1px solid #383b3d; }
.run-col2 { width: 20px; }
.run-col2 svg { width: 12px; height: 12px; }
.on { outline: 3px solid #3a3d3f; background: #3a3d3f; }
.hsep { width: 12px; height: 1px; background: #414446; display: block; }
.out { margin: 0; padding: 3px 0 0 7px; font: 9px/12px "DejaVu Sans Mono", monospace; color: #9a9ea1; white-space: pre; }

.toolbar-bottom { height: 15px; flex: none; display: flex; align-items: center; padding-left: 21px; gap: 15px; font-size: 7.600px; color: #a2a6a9; background: #2e3031; border-top: 1px solid #26282a; }
.toolbar-bottom span { display: flex; align-items: center; gap: 2px; height: 100%; }
.toolbar-bottom .active { background: #26282a; padding: 0 4px; margin: 0 -2px 0 -6px; font-size: 8px; }
.status { height: 15px; flex: none; display: flex; align-items: center; padding-left: 3px; gap: 5px; font-size: 7.950px; color: #a2a6a9; background: #2e3031; }
.status-msg { white-space: nowrap; }
.status-right { margin-left: auto; display: flex; align-items: center; gap: 9px; padding-right: 6px; }

/* Taskbar */
.taskbar { height: 30px; flex: none; display: flex; align-items: center; background: #1c1c1e; padding-bottom: 2px; }
.task-icons { margin-left: 484.500px; display: flex; align-items: center; gap: 10.900px; }
.tk { width: 17px; height: 17px; }
.tkw { position: relative; width: 18.800px; display: flex; justify-content: center; align-items: center; height: 26px; }
.tkw.run::after { content: ""; position: absolute; bottom: 0; left: 8px; width: 3px; height: 2px; background: #8a8a8a; }
.tkw.cur { background: #37393b; border-radius: 3px; width: 28.800px; margin: 0 -5px; }
.tkw.cur::after { content: ""; position: absolute; bottom: 0; left: 9px; width: 10px; height: 2px; background: #60cdff; }
.badge { position: absolute; top: 0; right: -3px; width: 9px; height: 9px; border-radius: 50%; background: #8f9294; color: #222; font: 700 7px/9px Roboto, sans-serif; text-align: center; }
.tray { margin-left: auto; display: flex; align-items: center; color: #e5e5e5; padding-right: 12px; font-size: 8.700px; }
.trayup { margin-right: 10px; color: #ccc; }
.eng { margin: 0 11px 0 13px; }
.tray .ic-12 { margin-right: 2px; }
.clock { display: flex; flex-direction: column; align-items: flex-end; line-height: 12px; margin-left: 11px; }
.nbadge { width: 13px; height: 13px; border-radius: 50%; background: #2f9bea; color: #111; font: 700 8px/13px Roboto, sans-serif; text-align: center; margin-left: 7px; }

/* floating windows */
.cinema { position: absolute; left: 379px; top: 94px; width: 533px; height: 553px; display: flex; flex-direction: column; border-radius: 6px 6px 4px 4px; overflow: hidden; box-shadow: 0 0 0 1px #57595b; z-index: 2; }
.cin-title { height: 21px; background: #fbfbfb; display: flex; align-items: center; padding-left: 5px; color: #a9a9a9; gap: 4px; }
.cin-name { margin-left: 2px; }
.cin-ctrls { margin-left: auto; display: flex; align-items: center; color: #b4b4b4; }
.cin-min { color: #ddd; margin-right: 24px; font-size: 9px; }
.cin-max { width: 9px; height: 9px; border: 1px solid #eee; margin-right: 21px; }
.cin-x { color: #bbb; margin-right: 10px; }
.cin-body { flex: 1; background: #292a2c; }

.notif { position: absolute; left: 1036px; top: 595px; width: 226px; height: 63px; background: #2f3234; border-radius: 4px; z-index: 2; display: flex; padding: 5px 0 0 7px; gap: 4px; box-shadow: 0 0 0 1px #35383a; }
.notif-ic { width: 11px; height: 11px; }
.notif-text { font-size: 8.300px; color: #9ea2a5; line-height: 10px; padding-top: 1px; }
.notif-text b { color: #bcbfc2; font-size: 8.200px; display: block; margin-bottom: 3px; }
.notif-text p { margin: 0 0 4px; line-height: 11px; }
.notif-text a { color: #3f6d8f; }
.notif-chev { color: #4e5153; position: absolute; right: 7px; top: 29px; }

/* DB Browser */
.db { position: absolute; left: 285px; top: 126px; width: 749px; height: 471px; background: #f0f0f0; border-radius: 6px 6px 3px 3px; z-index: 3; display: flex; flex-direction: column; color: #3b3b3b; font-size: 7.300px; overflow: hidden; box-shadow: 0 1px 5px rgba(0,0,0,.5); }
.db-title { height: 20px; background: #fdfdfd; display: flex; align-items: center; gap: 4px; padding-left: 5px; font-size: 7.900px; color: #3a3a3a; flex: none; }
.db-ctrls { margin-left: auto; display: flex; align-items: center; gap: 22px; padding-right: 10px; color: #222; }
.c-min { width: 8px; height: 1px; background: #222; display: block; }
.c-max { width: 8px; height: 8px; border: 1px solid #222; display: block; }
.db-menu { height: 14px; background: #fdfdfd; display: flex; align-items: center; gap: 10.500px; padding-left: 5px; flex: none; font-size: 7.400px; }
.db-toolbar { height: 21px; display: flex; align-items: center; padding-left: 10px; flex: none; border-bottom: 1px solid #e3e3e3; background: #f0f0f0; }
.grip { width: 1px; height: 15px; border-left: 1px dotted #b5b5b5; display: block; margin-right: 10px; }
.tb { display: flex; align-items: center; white-space: nowrap; }
.tb svg { width: 10px; height: 10px; }
.m17 { margin-right: 17px; }
.m16 { margin-right: 16px; }
.m13 { margin-right: 13px; }
.tb.off { color: #a3a3a3; }
.tb-open { position: relative; padding-right: 10px; margin-right: 11px; }
.drop { position: absolute; right: 1px; bottom: -3px; border: 2px solid transparent; border-top-color: #222; }
.more { margin-left: auto; color: #999; padding-right: 2px; font-size: 9px; }

.db-main { flex: 1; display: flex; min-height: 0; }
.db-left { width: 452px; flex: none; padding: 2px 0 0 3px; display: flex; flex-direction: column; }
.db-tabs { display: flex; height: 16px; flex: none; align-items: center; font-size: 7.500px; }
.db-tabs span { padding: 0 8px; height: 16px; line-height: 17px; }
.db-tabs span:first-child { padding-left: 6px; }
.db-tabs .sel { background: #fafafa; }
.db-pane { flex: 1; background: #fafafa; margin: 0 6px 9px 0; padding: 0 5px 0 2px; display: flex; flex-direction: column; min-height: 0; }
.tblbar { height: 24px; display: flex; align-items: center; gap: 6.500px; flex: none; }
.select { height: 13px; border: 1px solid #d5d5d5; background: #fff; display: flex; align-items: center; gap: 3px; padding: 0 3px; border-radius: 1px; }
.tbl-sel { width: 98px; margin-left: -3.500px; }
.sel-ch { margin-left: auto; color: #888; }
.tsep { width: 1px; height: 14px; background: #dcdcdc; display: block; }
.tb1 { margin-left: 2.500px; }
.more2 { color: #999; margin-left: 6px; }
.filter-any { margin-left: auto; margin-right: 2px; width: 83px; height: 13px; background: #fff; color: #a8a8a8; padding-left: 2px; line-height: 12px; border-bottom: 1px solid #d0d0d0; }
.grid { flex: 1; min-height: 0; background: #fff; border: 1px solid #a8a8a8; position: relative; }
.grid::before { content: ""; position: absolute; left: 0; top: 51px; bottom: 0; width: 11px; background: #f2f2f2; }
.grid-table { display: grid; grid-template-columns: 11px 26px 64px 79px 63px 62px 58px; grid-template-rows: 18px 16px 17px; font-size: 8.500px; color: #333; width: max-content; background: #fff; position: relative; }
.hc { text-align: center; line-height: 20px; background: #f8f8f8; white-space: nowrap; }
.hsel { background: #c5def5; font-weight: 700; color: #222; font-size: 9.300px; }
.fc { background: #fff; border: 1px solid #777; margin-right: -1px; color: #a5a5a5; padding-left: 1px; line-height: 13px; font-size: 8.300px; white-space: nowrap; overflow: hidden; }
.rh { background: #f2f2f2; }
.rhn { font: 700 8.500px/17px "Liberation Serif", serif; padding-left: 2px; color: #222; }
.dc { line-height: 17px; padding-left: 2px; border-bottom: 1px solid #e8e8e8; }
.num { text-align: right; padding-right: 2px; }
.dsel { background: #0a6ec2; color: #d5e8f8; position: relative; overflow: visible; }
.cursor { position: absolute; left: 19px; top: 3px; width: 8px; height: 12px; }
.pager { height: 19px; display: flex; align-items: center; gap: 0; flex: none; padding: 1px 0 0 3px; }
.pbtn { width: 10px; height: 10px; background: #fff; outline: 1px solid #eee; }
.m6 { margin-left: 6px; }
.pcount { margin: 0 3px 0 4px; font-size: 7.500px; }
.goto { margin-left: auto; background: #fff; padding: 0 4px; height: 13px; line-height: 12px; border: 1px solid #ececec; }
.goto-in { width: 144px; height: 13px; line-height: 13px; background: #fff; border-bottom: 1px solid #bbb; padding-left: 4px; margin-left: 3px; }

.db-right { flex: 1; min-width: 0; padding: 1px 3px 0 0; display: flex; flex-direction: column; }
.dock-title { height: 13px; background: #d9d9d9; display: flex; align-items: center; padding-left: 2px; justify-content: space-between; flex: none; color: #3a3a3a; font-size: 7.600px; }
.dock2 { margin-top: 7px; }
.dock-ctl { display: flex; align-items: center; gap: 6px; padding-right: 2px; }
.dark { color: #222; }
.edit-dock { height: 121px; flex: none; padding: 0 0 0 4px; display: flex; flex-direction: column; }
.mode { height: 20px; margin-top: 9px; display: flex; align-items: center; flex: none; }
.mode-lbl { width: 27px; flex: none; }
.mode-sel { width: 80px; border-color: #e0e0e0; }
.mm4 { margin-left: 4px; }
.mm8 { margin-left: 8px; }
.mm9 { margin-left: 9px; }
.mm11 { margin-left: 11px; }
.on-btn { width: 21px; height: 19px; background: #cfe4f7; display: flex; align-items: center; justify-content: center; margin-left: 6px; }
.more3 { color: #aaa; margin-left: 5px; }
.cell-editor { height: 47px; margin: 11px 9px 0 7px; flex: none; display: flex; border-bottom: 1px solid #aaa; background: linear-gradient(to right, #f0f0f0 0 19px, #fff 19px); font-size: 8.600px; }
.ln { width: 19px; padding: 1px 0 0 2px; line-height: 12px; color: #555; flex: none; }
.cell-text { padding: 1px 0 0 1px; line-height: 11px; }
.cell-text mark { background: #0a6ec2; color: #bcdcf5; padding: 0 0 1px; }
.cell-info { flex: 1; display: flex; align-items: center; justify-content: space-between; padding: 7px 8px 0 0; }
.info-text p { margin: 0; line-height: 12px; color: #333; }
.apply { background: #f6f6f6; color: #a5a5a5; padding: 0 2px; height: 14px; line-height: 14px; }

.schema-wrap { flex: 1; min-height: 0; padding: 7px 3px 0 5px; }
.schema { height: 215px; border: 1px solid #a8a8a8; background: #fff; overflow: hidden; position: relative; font-size: 8.400px; color: #333; }
.srow { height: 13.350px; display: grid; grid-template-columns: 107px 67px 1fr; line-height: 13.350px; white-space: nowrap; }
.shead { height: 15px; margin-bottom: 2px; padding-left: 2px; grid-template-columns: 105px 67px 1fr; color: #444; line-height: 16px; }
.wide { grid-template-columns: 1fr; }
.srow span { display: flex; align-items: center; overflow: hidden; }
.srow svg { margin-right: 4px; }
.n0 { padding-left: 1px; }
.n1 { padding-left: 15px; }
.n0b { padding-left: 14px; }
.lt { color: #999; margin-right: 4px; }
.n0 svg:first-child { color: #444; margin-right: 5px; }
.alt { background: linear-gradient(to right, #f6f6f6 0 171px, #fff 171px); }
.altw { background: #f6f6f6; }
.sch-scroll { position: absolute; left: 0; right: 0; bottom: 0; height: 6px; background: #f2f2f2; }
.sch-scroll i { display: block; margin-left: 11px; width: 83px; height: 1px; background: #777; margin-top: 2px; }
.dock-tabs { height: 17px; flex: none; display: flex; margin: 4px 0 1px 3px; border-top: 1px solid #dcdcdc; font-size: 7.500px; }
.dock-tabs span { padding: 0 8.500px; line-height: 16px; }
.dock-tabs span:first-child { padding-left: 3px; }
.dock-tabs .sel { background: #fafafa; padding: 0 8px; }
.db-status { height: 17px; flex: none; color: #b0b0b0; text-align: right; padding-right: 13px; line-height: 17px; margin-top: -1px; }
```
